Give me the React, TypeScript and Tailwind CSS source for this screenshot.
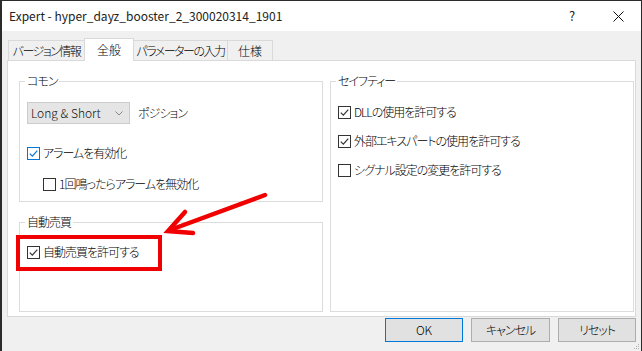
import React from "react";

function Check({ checked, blue }: { checked?: boolean; blue?: boolean }) {
  const c = blue ? "#0078d7" : "#333333";
  return (
    <span
      className={`inline-flex w-[13px] h-[13px] shrink-0 bg-white border items-center justify-center ${
        blue ? "border-[#0078d7]" : "border-[#333333]"
      }`}
    >
      {checked && (
        <svg width="11" height="11" viewBox="0 0 11 11">
          <path d="M1.8 5.6 L4.3 8.1 L9.3 2.6" fill="none" stroke={c} strokeWidth="1.2" />
        </svg>
      )}
    </span>
  );
}

function CheckRow({
  label,
  checked,
  blue,
  className,
}: {
  label: string;
  checked?: boolean;
  blue?: boolean;
  className?: string;
}) {
  return (
    <div className={`flex items-center h-[16px] ${className ?? ""}`}>
      <Check checked={checked} blue={blue} />
      <span className="ml-[3px] leading-[16px] whitespace-nowrap">{label}</span>
    </div>
  );
}

export default function App() {
  return (
    <div className="w-[642px] h-[351px] bg-[#f0f0f0] border-l-2 border-t border-r border-[#2b2b2b] relative overflow-hidden text-[12px] text-black font-light tracking-[-1px] font-['Noto_Sans_CJK_JP','Noto_Sans',sans-serif] [font-feature-settings:'palt']">
      {/* Title bar */}
      <div className="h-[30px] bg-white flex items-center pl-[7px] tracking-normal font-normal text-[#222]">
        <span className="whitespace-nowrap">Expert - hyper_dayz_booster_2_300020314_1901</span>
        <div className="ml-auto flex items-center h-full">
          <span className="w-[46px] text-center text-[13px]">?</span>
          <span className="w-[46px] h-full flex items-center justify-center">
            <svg width="11" height="11" viewBox="0 0 11 11">
              <path d="M0.5 0.5 L10.5 10.5 M10.5 0.5 L0.5 10.5" stroke="#111" strokeWidth="1" />
            </svg>
          </span>
        </div>
      </div>

      {/* Tabs */}
      <div className="mt-[7px] ml-[6px] flex items-end h-[22px] relative z-10 tracking-[-1.5px]">
        <div className="shrink-0 h-[20px] w-[77px] border border-b-0 border-[#d9d9d9] bg-[#f0f0f0] flex items-center justify-center whitespace-nowrap">
          バージョン情報
        </div>
        <div className="shrink-0 h-[23px] w-[50px] -ml-px -mb-px border border-b-0 border-[#d9d9d9] bg-white flex items-center justify-center whitespace-nowrap tracking-normal">
          全般
        </div>
        <div className="shrink-0 h-[20px] w-[95px] -ml-px border border-b-0 border-[#d9d9d9] bg-[#f0f0f0] flex items-center justify-center whitespace-nowrap">
          パラメーターの入力
        </div>
        <div className="shrink-0 h-[20px] w-[46px] -ml-px border border-b-0 border-[#d9d9d9] bg-[#f0f0f0] flex items-center justify-center whitespace-nowrap tracking-normal">
          仕様
        </div>
      </div>

      {/* Panel */}
      <div className="ml-[5px] mr-[5px] h-[257px] bg-white border border-[#d9d9d9] pt-[12px] pl-[11px] flex gap-[7px]">
        <div className="w-[304px] flex flex-col gap-[12px]">
          <fieldset className="h-[129px] border border-[#dcdcdc]">
            <legend className="ml-[5px] px-[2px] leading-[16px]">コモン</legend>
            <div className="pl-[7px]">
              <div className="mt-[13px] flex items-center">
                <div className="w-[103px] h-[22px] bg-[#e5e5e5] border border-[#cccccc] flex items-center pl-[3px] pr-[6px]">
                  <span className="whitespace-nowrap tracking-normal text-[#111]">Long &amp; Short</span>
                  <svg className="ml-auto" width="8" height="5" viewBox="0 0 8 5">
                    <path d="M0.5 0.5 L4 4 L7.5 0.5" fill="none" stroke="#888" strokeWidth="1" />
                  </svg>
                </div>
                <span className="ml-[8px]">ポジション</span>
              </div>
              <CheckRow className="mt-[21px]" label="アラームを有効化" checked blue />
              <CheckRow className="mt-[15px] ml-[16px]" label="1回鳴ったらアラームを無効化" />
            </div>
          </fieldset>
          <fieldset className="h-[98px] border border-[#dcdcdc]">
            <legend className="ml-[5px] px-[2px] leading-[16px]">自動売買</legend>
            <div className="pl-[7px]">
              <CheckRow className="mt-[14px]" label="自動売買を許可する" checked />
            </div>
          </fieldset>
        </div>
        <fieldset className="w-[304px] h-[239px] border border-[#dcdcdc]">
          <legend className="ml-[5px] px-[2px] leading-[16px]">セイフティー</legend>
          <div className="pl-[7px]">
            <CheckRow className="mt-[15px]" label="DLLの使用を許可する" checked />
            <CheckRow className="mt-[13px]" label="外部エキスパートの使用を許可する" checked />
            <CheckRow className="mt-[13px]" label="シグナル設定の変更を許可する" />
          </div>
        </fieldset>
      </div>

      {/* Buttons */}
      <div className="mt-[1px] pr-[5px] flex justify-end gap-[8px]">
        <button className="w-[78px] h-[24px] bg-[#e1e1e1] border border-[#0078d7] flex items-center justify-center tracking-normal">
          OK
        </button>
        <button className="w-[79px] h-[24px] bg-[#e1e1e1] border border-[#adadad] flex items-center justify-center">
          キャンセル
        </button>
        <button className="w-[78px] h-[24px] bg-[#e1e1e1] border border-[#adadad] flex items-center justify-center">
          リセット
        </button>
      </div>

      {/* Resize grip */}
      <svg className="absolute right-0 bottom-0" width="8" height="8" viewBox="0 0 8 8">
        <rect x="5" y="1" width="1" height="1" fill="#b0b0b0" />
        <rect x="3" y="3" width="1" height="1" fill="#b0b0b0" />
        <rect x="5" y="3" width="1" height="1" fill="#b0b0b0" />
        <rect x="1" y="5" width="1" height="1" fill="#b0b0b0" />
        <rect x="3" y="5" width="1" height="1" fill="#b0b0b0" />
        <rect x="5" y="5" width="1" height="1" fill="#b0b0b0" />
      </svg>

      {/* Annotation: red box */}
      <div className="absolute left-[14px] top-[234px] w-[146px] h-[36px] border-[4px] border-[#f00000]" />
      {/* Annotation: arrow */}
      <svg className="absolute left-[-2px] top-[-1px] pointer-events-none" width="642" height="351" viewBox="0 0 642 351">
        <path d="M265 195 L170 230" stroke="#f00000" strokeWidth="4.5" strokeLinecap="round" fill="none" />
        <path d="M185 212 L168 231 L193 233" stroke="#f00000" strokeWidth="4.5" strokeLinecap="round" strokeLinejoin="miter" fill="none" />
      </svg>
    </div>
  );
}
